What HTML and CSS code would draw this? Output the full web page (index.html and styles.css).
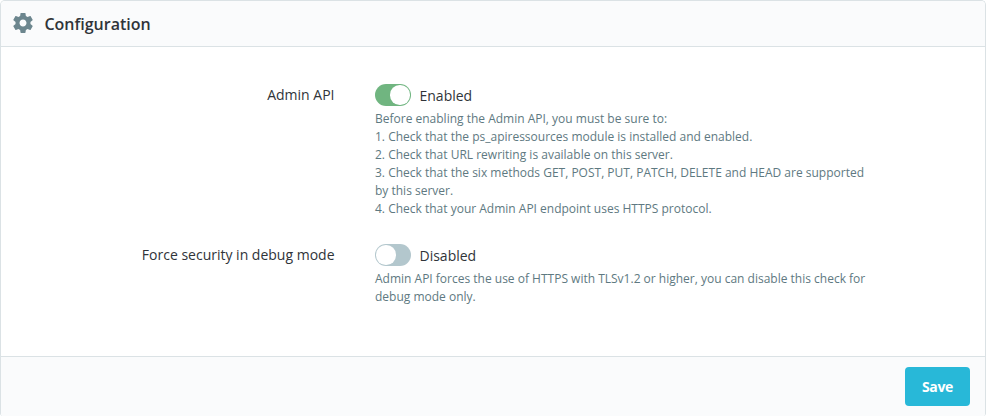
FILE: index.html
```html
<!DOCTYPE html>
<html lang="en">
<head>
<meta charset="utf-8">
<title>Configuration</title>
<link rel="stylesheet" href="styles.css">
</head>
<body>
<form class="card">
  <h3 class="card-header">
    <svg class="gear" viewBox="0 0 24 24"><path d="M19.43 12.98c.04-.32.07-.64.07-.98s-.03-.66-.07-.98l2.11-1.65c.19-.15.24-.42.12-.64l-2-3.46c-.12-.22-.39-.3-.61-.22l-2.49 1c-.52-.4-1.08-.73-1.69-.98l-.38-2.65C14.46 2.18 14.25 2 14 2h-4c-.25 0-.46.18-.49.42l-.38 2.65c-.61.25-1.17.59-1.69.98l-2.49-1c-.23-.09-.49 0-.61.22l-2 3.46c-.13.22-.07.49.12.64l2.11 1.65c-.04.32-.07.65-.07.98s.03.66.07.98l-2.11 1.65c-.19.15-.24.42-.12.64l2 3.46c.12.22.39.3.61.22l2.49-1c.52.4 1.08.73 1.69.98l.38 2.65c.03.24.24.42.49.42h4c.25 0 .46-.18.49-.42l.38-2.65c.61-.25 1.17-.59 1.69-.98l2.49 1c.23.09.49 0 .61-.22l2-3.46c.12-.22.07-.49-.12-.64l-2.11-1.65zM12 15.5c-1.93 0-3.5-1.57-3.5-3.5s1.57-3.5 3.5-3.5 3.5 1.57 3.5 3.5-1.57 3.5-3.5 3.5z"/></svg>
    <span class="title">Configuration</span>
  </h3>
  <div class="card-body">
    <div class="row">
      <div class="label">Admin API</div>
      <div class="field">
        <div class="switch"><span class="track on"></span><span>Enabled</span></div>
        <p class="help">Before enabling the Admin API, you must be sure to:<br>1. Check that the ps_apiressources module is installed and enabled.<br>2. Check that URL rewriting is available on this server.<br>3. Check that the six methods GET, POST, PUT, PATCH, DELETE and HEAD are supported<br>by this server.<br>4. Check that your Admin API endpoint uses HTTPS protocol.</p>
      </div>
    </div>
    <div class="row">
      <div class="label">Force security in debug mode</div>
      <div class="field">
        <div class="switch"><span class="track"></span><span>Disabled</span></div>
        <p class="help">Admin API forces the use of HTTPS with TLSv1.2 or higher, you can disable this check for<br>debug mode only.</p>
      </div>
    </div>
  </div>
  <div class="card-footer"><button class="save" type="button">Save</button></div>
</form>
</body>
</html>
```
FILE: styles.css
```css
* { box-sizing: border-box; }
body { margin: 0; font: 14px/21px "Open Sans", sans-serif; color: #303439; background: #fff; }
.card { height: 416px; display: flex; flex-direction: column; border: 1px solid #dbe2e5; border-bottom: 0; border-radius: 5px 5px 3px 3px; overflow: hidden; }
.card-header { margin: 0; height: 46px; flex: none; padding: 0 10px; display: flex; align-items: center; gap: 9.4px; background: #fafbfc; border-bottom: 1px solid #dbe2e5; font-size: 16px; font-weight: 600; }
.gear { width: 24px; height: 24px; margin-bottom: 1px; fill: #6c868e; }
.title { padding-top: 2px; }
.card-body { flex: 1; padding-top: 35px; }
.row { display: flex; gap: 40.5px; margin-bottom: 24px; }
.label { width: 333.5px; text-align: right; padding-top: 2px; }
.field { white-space: nowrap; }
.switch { display: flex; align-items: center; gap: 8.5px; height: 26px; margin-bottom: 2px; }
.track { width: 36px; height: 22px; border-radius: 11px; background: #b3c7cd; display: flex; padding: 1.25px; }
.track::before { content: ""; width: 19.5px; height: 19.5px; border-radius: 50%; background: #fff; }
.track.on { background: #70b580; justify-content: flex-end; }
.help { margin: 0; font-size: 12px; line-height: 18px; color: #5e7981; }
.card-footer { height: 60px; flex: none; padding: 10px 15px; display: flex; justify-content: flex-end; background: #fafbfc; border-top: 1px solid #dbe2e5; }
.save { width: 65px; height: 39px; padding: 0; border: 0; border-radius: 4px; background: #28b8d8; color: #fff; font: 700 14px "Open Sans", sans-serif; letter-spacing: -.3px; }
```
